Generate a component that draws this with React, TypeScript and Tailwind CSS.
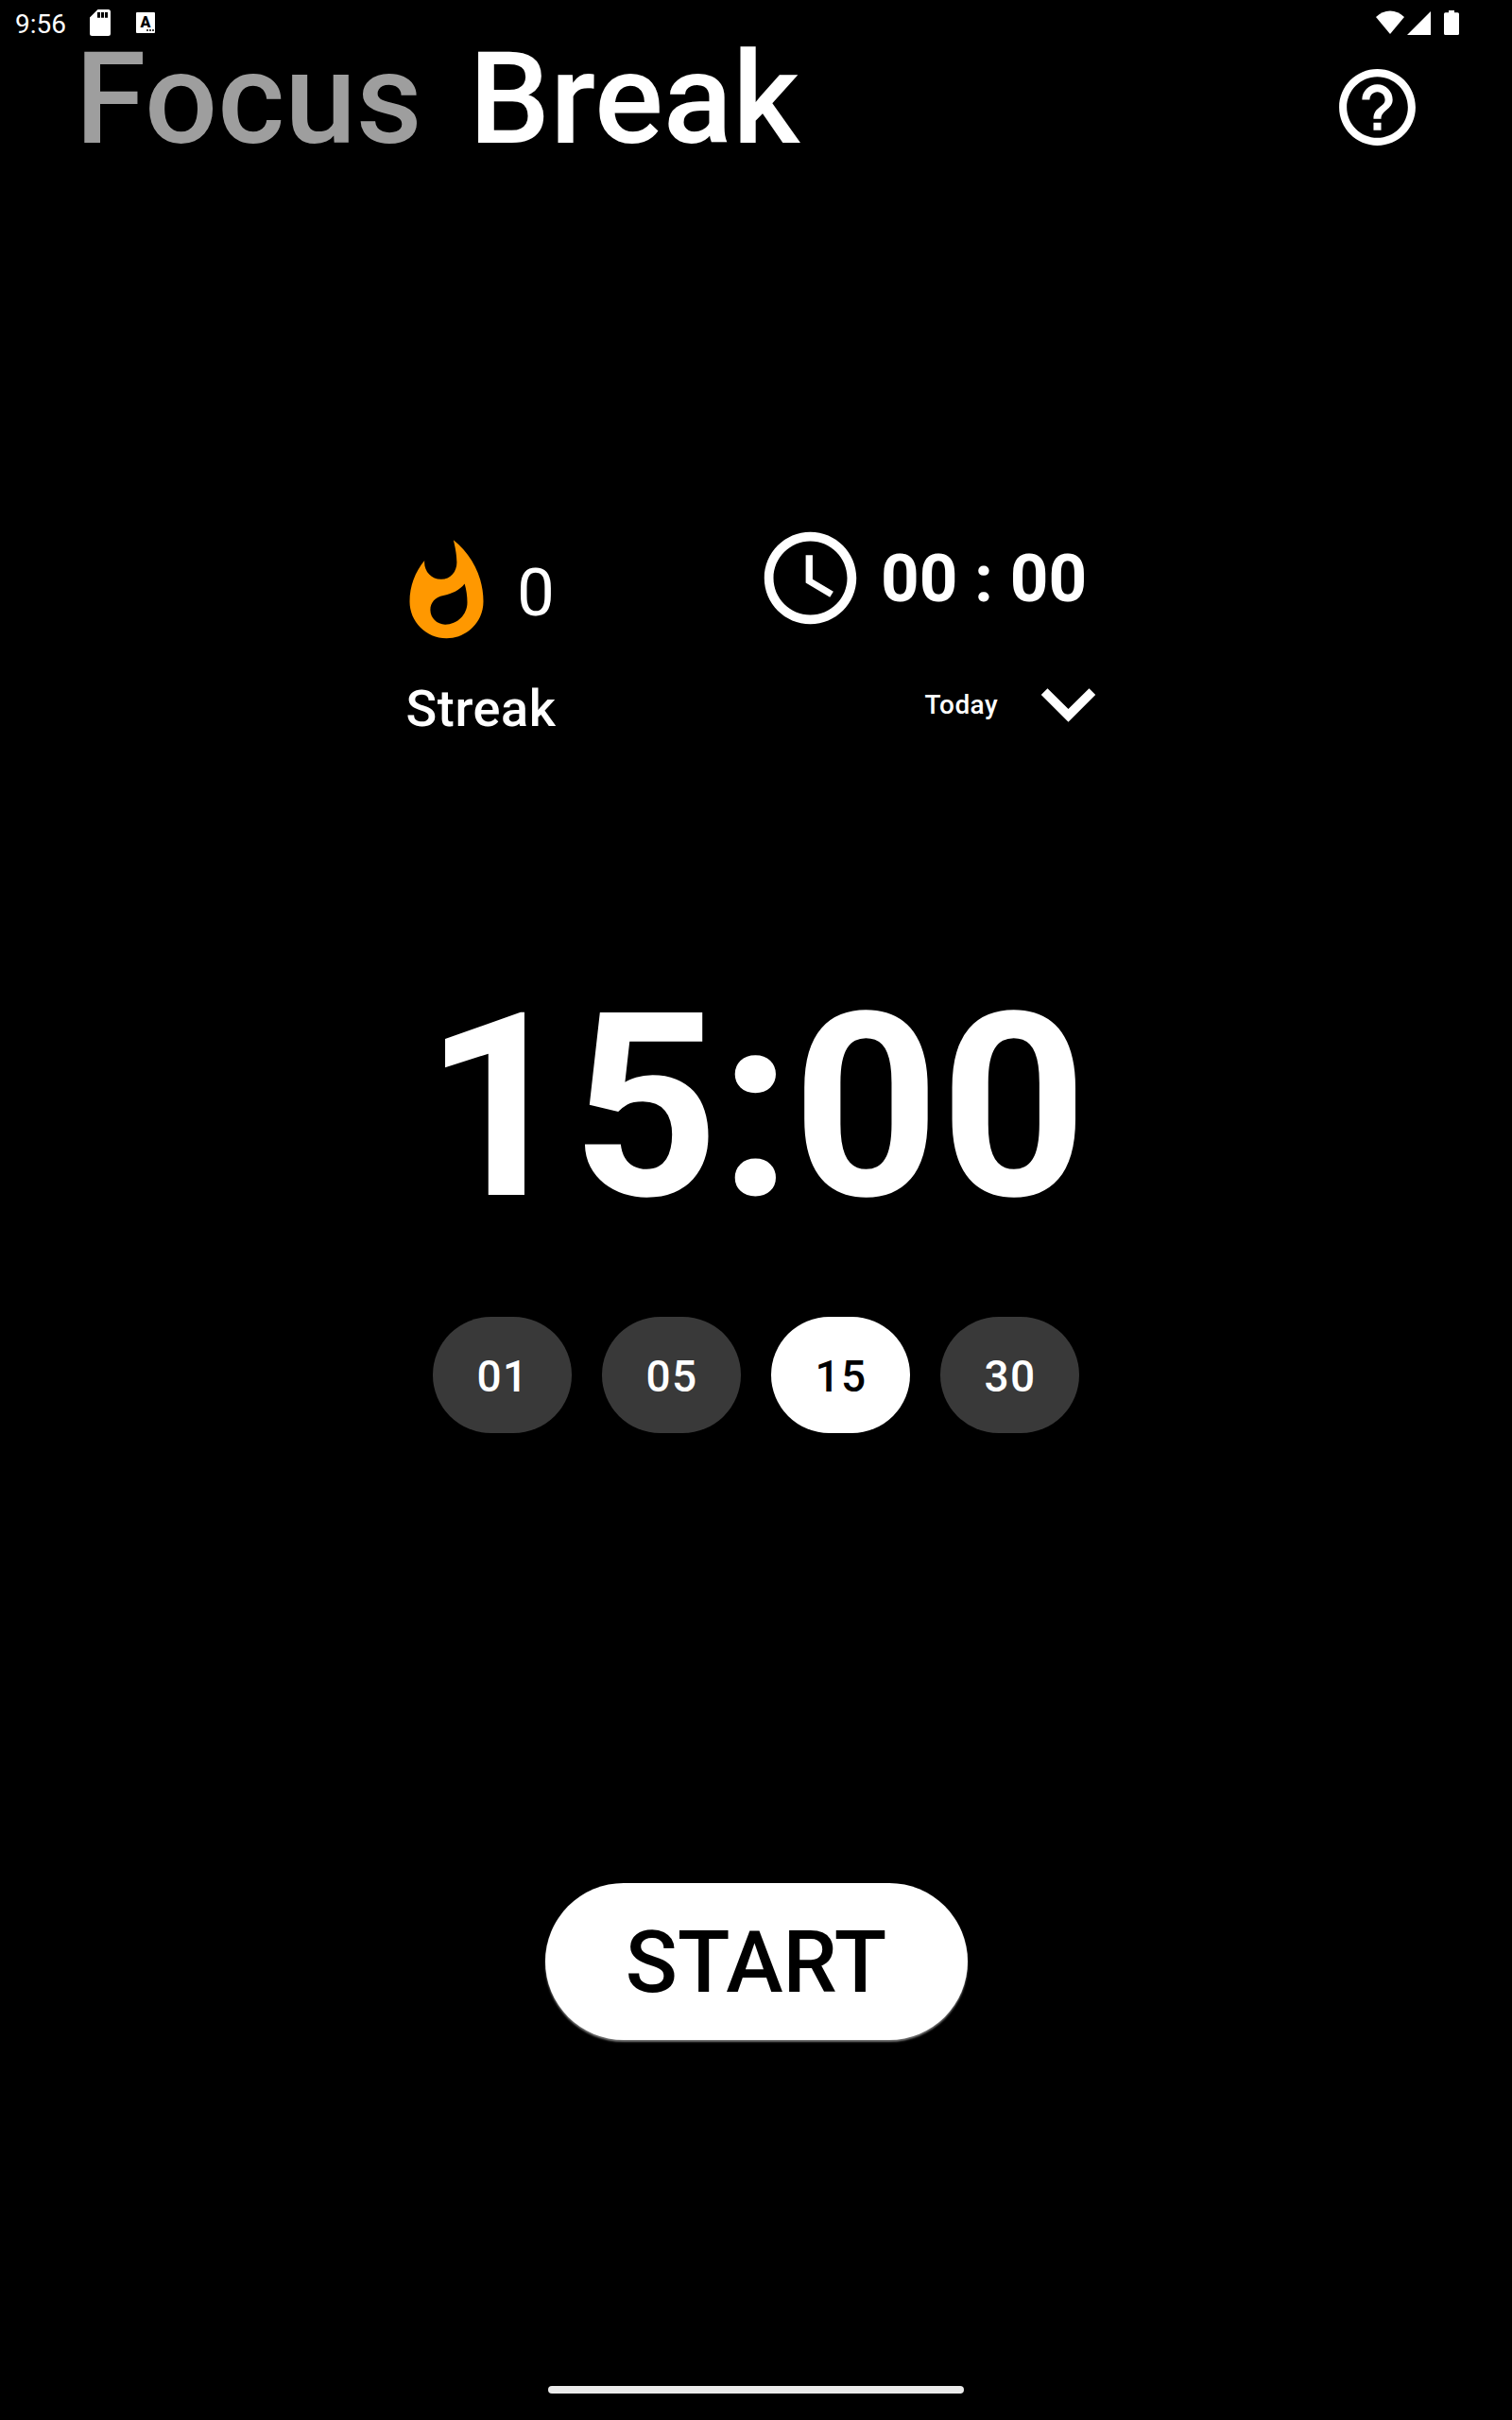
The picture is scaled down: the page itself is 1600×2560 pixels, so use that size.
import React, { useState } from "react";
import { MdAccessTime, MdHelpOutline, MdKeyboardArrowDown, MdWhatshot } from "react-icons/md";

function SdCardIcon() {
  return (
    <svg className="h-7 w-[22px]" viewBox="0 0 22 28" fill="white">
      <path
        fillRule="evenodd"
        d="M8.500 0H19.500Q22 0 22 2.500V25.500Q22 28 19.500 28H2.500Q0 28 0 25.500V8.500ZM8 3V8.700H11V3ZM12 3V8.700H15V3ZM16 3V8.700H19V3Z"
      />
    </svg>
  );
}

function KeyboardBadge() {
  return (
    <div className="flex h-[22px] w-5 flex-col rounded-[1px] bg-white pt-[3px] text-black">
      <span className="text-center text-[16px] font-black leading-[15px]">A</span>
      <div className="flex justify-end gap-[1px] pr-[1px]">
        <i className="size-[2px] rounded-full bg-black" />
        <i className="size-[2px] rounded-full bg-black" />
        <i className="size-[2px] rounded-full bg-black" />
      </div>
    </div>
  );
}

function StatusBar() {
  return (
    <header className="flex h-12 shrink-0 items-start pl-4 pr-14">
      <span className="mt-[11px] w-[79px] text-[28px] leading-[29px]">9:56</span>
      <div className="mt-[10px]">
        <SdCardIcon />
      </div>
      <div className="ml-[27px] mt-[13px]">
        <KeyboardBadge />
      </div>
      <div className="ml-auto mt-[11px] flex items-start">
        <svg className="h-[25px] w-[30px]" viewBox="0 0 30 25" fill="white">
          <path d="M0 7Q6.500 .4 15 .4T30 7L15 25Z" />
        </svg>
        <svg className="ml-[3px] mt-[1px] h-[25px] w-[25px]" viewBox="0 0 25 25" fill="white">
          <path d="M25 0V25H0Z" />
        </svg>
        <svg className="ml-[14px] h-[26px] w-4" viewBox="0 0 16 26" fill="white">
          <path d="M5 0H11V2.300H14.500Q16 2.300 16 3.800V24.500Q16 26 14.500 26H1.500Q0 26 0 24.500V3.800Q0 2.300 1.500 2.300H5Z" />
        </svg>
      </div>
    </header>
  );
}

function Header() {
  return (
    <nav className="flex h-[131px] shrink-0 items-start pl-[79.500px] pr-[94px]">
      <button className="mt-[-11px] text-[136px] font-medium leading-none text-[#9e9e9e]">Focus</button>
      <button className="ml-[49.500px] mt-[-11px] text-[136px] font-medium leading-none">Break</button>
      <button className="ml-auto mt-[17px]" aria-label="Help">
        <MdHelpOutline size={97} />
      </button>
    </nav>
  );
}

function Stats() {
  return (
    <section className="mt-[374px] flex h-[249px] shrink-0 items-start pl-[414px]">
      <div className="mt-[15px] flex w-[385px] flex-col">
        <div className="flex items-center">
          <MdWhatshot size={117} className="text-[#ff9800]" />
          <span className="ml-[16px] text-[71px] leading-none">0</span>
        </div>
        <span className="ml-[15.500px] mt-[38px] text-[54px] font-medium leading-none tracking-[0.6px]">Streak</span>
      </div>
      <div className="flex w-[389px] flex-col">
        <div className="flex items-center">
          <MdAccessTime size={117} />
          <span className="ml-[16px] whitespace-pre text-[71px] font-bold leading-none">00 : 00</span>
        </div>
        <button className="mt-[17px] flex items-center justify-end">
          <span className="pt-[2px] text-[28px] font-medium leading-[30px] tracking-[0.4px]">Today</span>
          <MdKeyboardArrowDown size={115} className="ml-[17px]" />
        </button>
      </div>
    </section>
  );
}

const durations = ["01", "05", "15", "30"];

export default function App() {
  const [selected, setSelected] = useState("15");
  return (
    <div className="flex h-[2560px] w-[1600px] flex-col overflow-hidden bg-black font-['Roboto',sans-serif] text-white">
      <StatusBar />
      <Header />
      <Stats />
      <div className="mt-[233px] text-center text-[271.500px] font-bold leading-[273px] tracking-[0.6px]">{selected}:00</div>
      <div className="mt-[85.300px] flex justify-center gap-[31.500px]">
        {durations.map((d) => (
          <button
            key={d}
            onClick={() => setSelected(d)}
            className={
              "flex h-[122.400px] w-[147.500px] items-center justify-center rounded-full pl-[1px] pt-[3px] text-[46px] font-medium leading-none tracking-[1.300px] " +
              (d === selected ? "bg-white text-black" : "bg-[#393939] text-white")
            }
          >
            {d}
          </button>
        ))}
      </div>
      <button className="mt-[476.300px] flex h-[166px] w-[447px] shrink-0 items-center justify-center self-center rounded-full bg-white pt-[4px] text-[91px] font-medium leading-none text-black shadow-[0_2px_2px_#757575]">
        START
      </button>
      <div className="mt-[366px] h-2 w-[440px] shrink-0 self-center rounded-full bg-[#ebebeb]" />
    </div>
  );
}
